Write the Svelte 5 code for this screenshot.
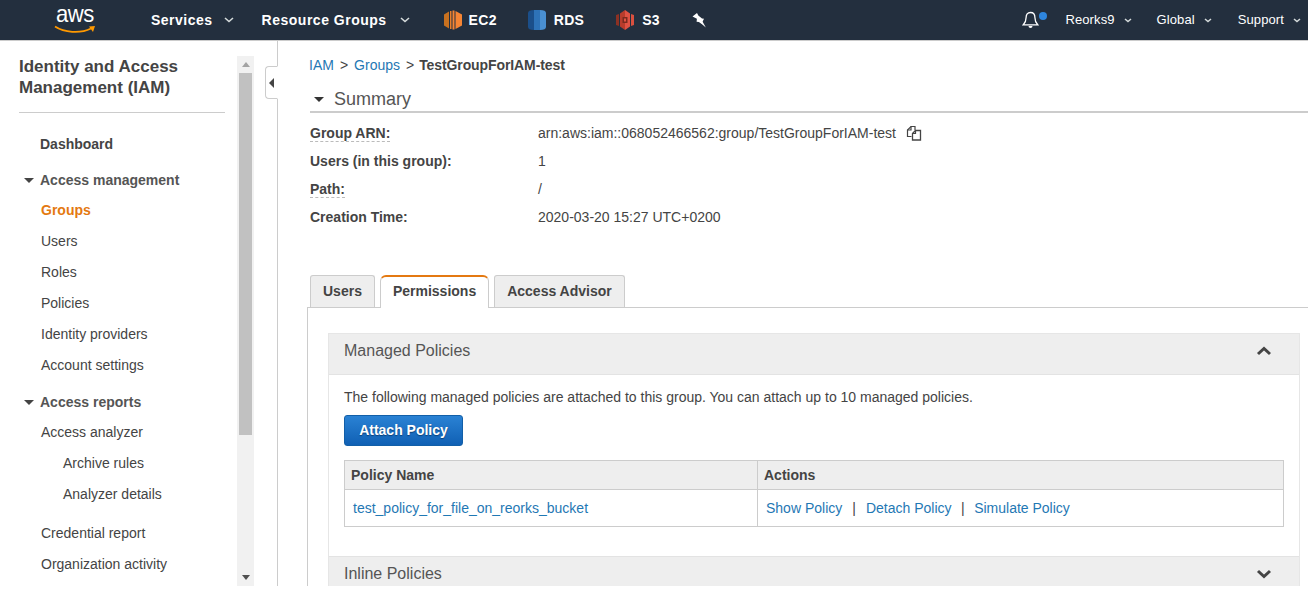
<script>
  const navTop = [
    { label: 'Groups', active: true },
    { label: 'Users' },
    { label: 'Roles' },
    { label: 'Policies' },
    { label: 'Identity providers' },
    { label: 'Account settings' }
  ];
  const summary = [
    { k: 'Group ARN:', v: 'arn:aws:iam::068052466562:group/TestGroupForIAM-test', dash: true, copy: true },
    { k: 'Users (in this group):', v: '1' },
    { k: 'Path:', v: '/', dash: true },
    { k: 'Creation Time:', v: '2020-03-20 15:27 UTC+0200' }
  ];
</script>

<div class="page">
  <header class="top">
    <div class="logo">
      <span class="aws">aws</span>
      <svg class="smile" width="42" height="10" viewBox="0 0 42 10"><path d="M1 1.5C10 7.5 26 9 37 3.5" fill="none" stroke="#f90" stroke-width="1.8"/><path d="M35 1.5L41 1L39 7Z" fill="#f90"/></svg>
    </div>
    <span class="menu services">Services<svg class="chev" width="10" height="6" viewBox="0 0 10 6"><path d="M1 1l4 3.5L9 1" fill="none" stroke="#d5dbdb" stroke-width="1.6"/></svg></span>
    <span class="menu groups">Resource Groups<svg class="chev" width="10" height="6" viewBox="0 0 10 6"><path d="M1 1l4 3.5L9 1" fill="none" stroke="#d5dbdb" stroke-width="1.6"/></svg></span>
    <span class="svc ec2">
      <svg width="18" height="20" viewBox="0 0 18 20"><path d="M5 1.5L0 4.5v11l5 3z" fill="#c8711f"/><path d="M6 1h1.5v18H6z" fill="#e8802c"/><path d="M8.5 0.5h2v19h-2z" fill="#f58534"/><path d="M11.5 1l6.5 3.5v11L11.5 19z" fill="#f58534"/></svg>
      EC2
    </span>
    <span class="svc rds">
      <svg width="18" height="20" viewBox="0 0 18 20"><path d="M6 0C2 0 0 1 0 3v14c0 2 2 3 6 3z" fill="#1b4f8a"/><path d="M6 0h6v20H6z" fill="#2e73b8"/><path d="M12 0c4 0 6 1 6 3v14c0 2-2 3-6 3z" fill="#4a90d2"/></svg>
      RDS
    </span>
    <span class="svc s3">
      <svg width="18" height="20" viewBox="0 0 18 20"><path d="M0 5l3-1v12l-3-1z" fill="#8c3123"/><path d="M15 4l3 1v10l-3 1z" fill="#d9503f"/><path d="M4 3.5L9 0v20l-5-3.5z" fill="#b83c2c"/><path d="M9 0l5 3.5v13L9 20z" fill="#e05243"/><path d="M6.5 7h5v6h-5z" fill="#7a2a1e"/><path d="M8 8.5h2v3H8z" fill="#e05243"/></svg>
      S3
    </span>
    <svg class="pin" width="14" height="15" viewBox="0 0 14 15"><path d="M0.5 3.5L5 0l1.3 2.5 3.7 3 2 .3-2.4 5-2.8-1.8-2.2-.2.3-3z" fill="#fff"/><path d="M8 9.5L13.8 14.5 10.5 8.5z" fill="#fff"/></svg>
    <div class="right">
      <span class="bell">
        <svg width="17" height="18" viewBox="0 0 17 18"><path d="M8.5 1.5c-3 0-4.4 2.3-4.4 5 0 3.6-1 5.4-2.8 7.3h14.4c-1.8-1.9-2.8-3.7-2.8-7.3 0-2.7-1.4-5-4.4-5z" fill="none" stroke="#fff" stroke-width="1.3"/><path d="M6.5 15h4a2 2 0 0 1-4 0z" fill="#fff"/></svg>
        <i class="dot"></i>
      </span>
      <span class="rmenu user">Reorks9<svg class="tri" width="8" height="5" viewBox="0 0 8 5"><path d="M1 1l3 2.6L7 1" fill="none" stroke="#d5dbdb" stroke-width="1.5"/></svg></span>
      <span class="rmenu region">Global<svg class="tri" width="8" height="5" viewBox="0 0 8 5"><path d="M1 1l3 2.6L7 1" fill="none" stroke="#d5dbdb" stroke-width="1.5"/></svg></span>
      <span class="rmenu support">Support<svg class="tri" width="8" height="5" viewBox="0 0 8 5"><path d="M1 1l3 2.6L7 1" fill="none" stroke="#d5dbdb" stroke-width="1.5"/></svg></span>
    </div>
  </header>

  <div class="body">
    <aside class="side">
      <nav class="nav">
        <h2>Identity and Access Management (IAM)</h2>
        <div class="rule"></div>
        <div class="dash">Dashboard</div>
        <div class="sect first"><i class="caret"></i>Access management</div>
        {#each navTop as n}
          <div class="item" class:active={n.active}>{n.label}</div>
        {/each}
        <div class="sect second"><i class="caret"></i>Access reports</div>
        <div class="item">Access analyzer</div>
        <div class="item sub">Archive rules</div>
        <div class="item sub">Analyzer details</div>
        <div class="item gap">Credential report</div>
        <div class="item">Organization activity</div>
      </nav>
      <div class="scroll">
        <span class="arrow up"></span>
        <div class="thumb"></div>
        <span class="arrow down"></span>
      </div>
    </aside>

    <div class="gutter">
      <div class="toggle"><i></i></div>
    </div>

    <main class="main">
      <div class="crumbs">
        <a href="#iam">IAM</a><span class="sep">&gt;</span><a href="#groups">Groups</a><span class="sep last">&gt;</span><b>TestGroupForIAM-test</b>
      </div>
      <div class="sumhead"><i class="caret dark"></i>Summary</div>
      <div class="sumrows">
        {#each summary as r}
          <div class="row">
            <div class="k"><span class:dashed={r.dash}>{r.k}</span></div>
            <div class="v">{r.v}</div>
            {#if r.copy}
              <svg class="copy" width="16" height="16" viewBox="0 0 16 16"><path d="M5.5 11.5H1.5V5L5 1.5h4V5" fill="none" stroke="#444" stroke-width="1.2"/><path d="M1.5 5H5V1.5" fill="none" stroke="#444" stroke-width="1.2"/><path d="M6.5 8.5L9.5 5.5H14.5V15H6.5Z" fill="none" stroke="#444" stroke-width="1.3"/><path d="M6.5 8.5H9.5V5.5" fill="none" stroke="#444" stroke-width="1.2"/></svg>
            {/if}
          </div>
        {/each}
      </div>

      <div class="tabs">
        <div class="tab">Users</div>
        <div class="tab on">Permissions</div>
        <div class="tab">Access Advisor</div>
      </div>

      <div class="tabbody">
        <section class="panel">
          <div class="phead"><span>Managed Policies</span>
            <svg width="16" height="10" viewBox="0 0 16 10"><path d="M2 8l6-5.5L14 8" fill="none" stroke="#444" stroke-width="3"/></svg>
          </div>
          <div class="pbody">
            <p>The following managed policies are attached to this group. You can attach up to 10 managed policies.</p>
            <button class="btn">Attach Policy</button>
            <div class="table">
              <div class="cell th c1">Policy Name</div>
              <div class="cell th c2">Actions</div>
              <div class="cell c1"><a href="#p">test_policy_for_file_on_reorks_bucket</a></div>
              <div class="cell c2 acts"><a href="#s">Show Policy</a><span class="bar">|</span><a href="#d">Detach Policy</a><span>|</span><a href="#m">Simulate Policy</a></div>
            </div>
          </div>
          <div class="phead inline"><span>Inline Policies</span>
            <svg width="16" height="10" viewBox="0 0 16 10"><path d="M2 2l6 5.5L14 2" fill="none" stroke="#444" stroke-width="3"/></svg>
          </div>
        </section>
      </div>
    </main>
  </div>
</div>

<style>
  :global(body) { margin: 0; background: #fff; }
  .page { width: 1308px; height: 586px; overflow: hidden; font: 14px/20px "Liberation Sans", Arial, sans-serif; color: #444; }
  a { color: #1f78b4; text-decoration: none; }

  .top { height: 41px; background: #232f3e; display: flex; align-items: center; color: #fff; font-weight: 700; box-sizing: border-box; border-bottom: 1px solid #ccc; }
  .logo { width: 42px; margin-left: 54px; height: 36px; position: relative; flex: none; }
  .aws { display: block; font: 400 24px/24px "Liberation Sans", sans-serif; color: #fff; letter-spacing: -0.5px; text-align: center; transform: scaleX(0.92); }
  .smile { position: absolute; left: 0; top: 23px; }
  .menu { display: flex; align-items: center; font-size: 14px; letter-spacing: 0.5px; color: #fff; }
  .services { margin-left: 55px; }
  .groups { margin-left: 28px; }
  .chev { margin-left: 11px; }
  .groups .chev { margin-left: 13px; }
  .svc { display: flex; align-items: center; font-size: 14px; letter-spacing: 0.3px; }
  .svc svg { margin-right: 7px; }
  .ec2 { margin-left: 34px; }
  .rds { margin-left: 31px; }
  .rds svg { margin-right: 8px; }
  .s3 { margin-left: 32px; }
  .s3 svg { margin-right: 8px; }
  .pin { margin-left: 32px; }
  .right { margin-left: auto; display: flex; align-items: center; font-weight: 400; font-size: 13px; color: #fff; }
  .bell { position: relative; width: 17px; height: 18px; margin-right: 26px; }
  .bell svg { display: block; }
  .dot { position: absolute; left: 17px; top: 1px; width: 8px; height: 8px; border-radius: 50%; background: #2e86de; }
  .rmenu { display: flex; align-items: center; font: 400 13px/20px "Liberation Sans", sans-serif; letter-spacing: 0.1px; }
  .tri { margin-left: 9px; }
  .region { margin-left: 25px; }
  .support { margin-left: 26px; margin-right: 7px; }

  .body { display: flex; height: 545px; }
  .side { width: 254px; flex: none; display: flex; padding-top: 15px; box-sizing: border-box; }
  .nav { width: 237px; flex: none; box-sizing: border-box; padding: 0 12px 0 19px; }
  .nav h2 { margin: 0; font: 700 17px/21px "Liberation Sans", sans-serif; color: #444; width: 200px; }
  .rule { border-top: 1px solid #ccc; margin-top: 14px; width: 206px; }
  .dash { margin: 21px 0 0 21px; font-weight: 700; color: #444; }
  .sect { display: flex; align-items: center; font-weight: 700; color: #555; }
  .sect.first { margin-top: 16px; }
  .sect.second { margin-top: 11px; }
  .caret { width: 0; height: 0; border: 5px solid transparent; border-top: 5px solid #444; border-bottom: 0; margin: 1px 6px 0 5px; }
  .item { height: 31px; line-height: 31px; margin-left: 22px; color: #444; }
  .item.active { color: #e47911; font-weight: 700; }
  .item.sub { margin-left: 44px; }
  .item.gap { margin-top: 8px; }
  .sect + .item { line-height: 30px; margin-top: 5px; }

  .scroll { width: 17px; height: 530px; background: #f1f1f1; flex: none; display: flex; flex-direction: column; align-items: center; }
  .thumb { width: 13px; height: 362px; background: #c1c1c1; }
  .arrow { width: 0; height: 0; border: 4px solid transparent; flex: none; }
  .arrow.up { border-bottom: 5px solid #a3a3a3; border-top: 0; margin: 6px 0; }
  .arrow.down { border-top: 5px solid #505050; border-bottom: 0; margin-top: auto; margin-bottom: 6px; }

  .gutter { width: 24px; flex: none; border-right: 1px solid #ccc; box-sizing: border-box; position: relative; }
  .toggle { position: absolute; right: -1px; top: 25px; width: 13px; height: 33px; box-sizing: border-box; border: 1px solid #ccc; border-right: 1px solid #fff; border-radius: 4px 0 0 4px; background: #fff; display: flex; align-items: center; justify-content: center; }
  .toggle i { width: 0; height: 0; border: 5px solid transparent; border-left: 0; border-right: 5px solid #444; }

  .main { flex: 1; min-width: 0; padding: 14px 0 0 29px; }
  .crumbs { display: flex; align-items: center; height: 20px; margin-left: 2px; }
  .crumbs .sep { margin: 0 6px; }
  .crumbs .sep.last { margin-right: 5px; }
  .crumbs b { color: #444; letter-spacing: -0.1px; }
  .sumhead { margin-left: 3px; height: 38px; box-sizing: border-box; display: flex; align-items: center; font-size: 18px; color: #555; border-bottom: 2px solid #ccc; padding-top: 12px; }
  .caret.dark { margin: 1px 10px 0 4px; border-top-color: #333; }
  .sumrows { margin-left: 3px; margin-top: 6px; }
  .row { display: flex; align-items: center; height: 28px; }
  .k { width: 228px; font-weight: 700; color: #444; flex: none; }
  .dashed { border-bottom: 1px dashed #bbb; }
  .v { color: #444; }
  .copy { margin-left: 10px; }

  .tabs { display: flex; margin-top: 44px; margin-left: 3px; height: 32px; gap: 5px; position: relative; }
  .tab { height: 32px; box-sizing: border-box; padding: 5px 12px; background: #eee; border: 1px solid #ccc; border-bottom: 0; border-radius: 3px 3px 0 0; font-weight: 700; color: #444; line-height: 20px; }
  .tab.on { background: #fff; border-top: 2px solid #e47911; border-radius: 6px 6px 0 0; position: relative; height: 33px; z-index: 1; padding-top: 4px; }
  .tabbody { border-top: 1px solid #ccc; border-left: 1px solid #ccc; padding: 25px 8px 0 20px; }

  .panel { border: 1px solid #e6e6e6; border-bottom: 0; }
  .phead { height: 34px; padding: 0 27px 6px 15px; background: #eee; border-bottom: 1px solid #e3e3e3; display: flex; align-items: center; justify-content: space-between; font-size: 16px; color: #555; }
  .phead.inline { border-top: 1px solid #e3e3e3; border-bottom: 0; height: 34px; padding-bottom: 0; }
  .pbody { padding: 12px 15px 29px; height: 140px; }
  .pbody p { margin: 0; line-height: 20px; color: #444; }
  .btn { display: block; margin-top: 8px; width: 119px; height: 31px; border: 1px solid #125fa8; border-radius: 3px; background: linear-gradient(#2a82d4, #1060b4); color: #fff; font: 700 14px "Liberation Sans", sans-serif; padding: 0 0 2px; text-shadow: 0 1px 1px #0a3f78; }
  .table { margin-top: 14px; display: grid; grid-template-columns: 413px 1fr; border: 1px solid #ccc; border-bottom: 0; border-right: 0; }
  .cell { border-right: 1px solid #ccc; border-bottom: 1px solid #ccc; padding: 0 6px; }
  .th { height: 28px; line-height: 28px; background: #eee; font-weight: 700; color: #444; }
  .cell:not(.th) { height: 36px; line-height: 36px; padding: 0 8px; }
  .acts span { margin: 0 9.5px; color: #444; }
  .acts .bar { margin: 0 10px; }
</style>
